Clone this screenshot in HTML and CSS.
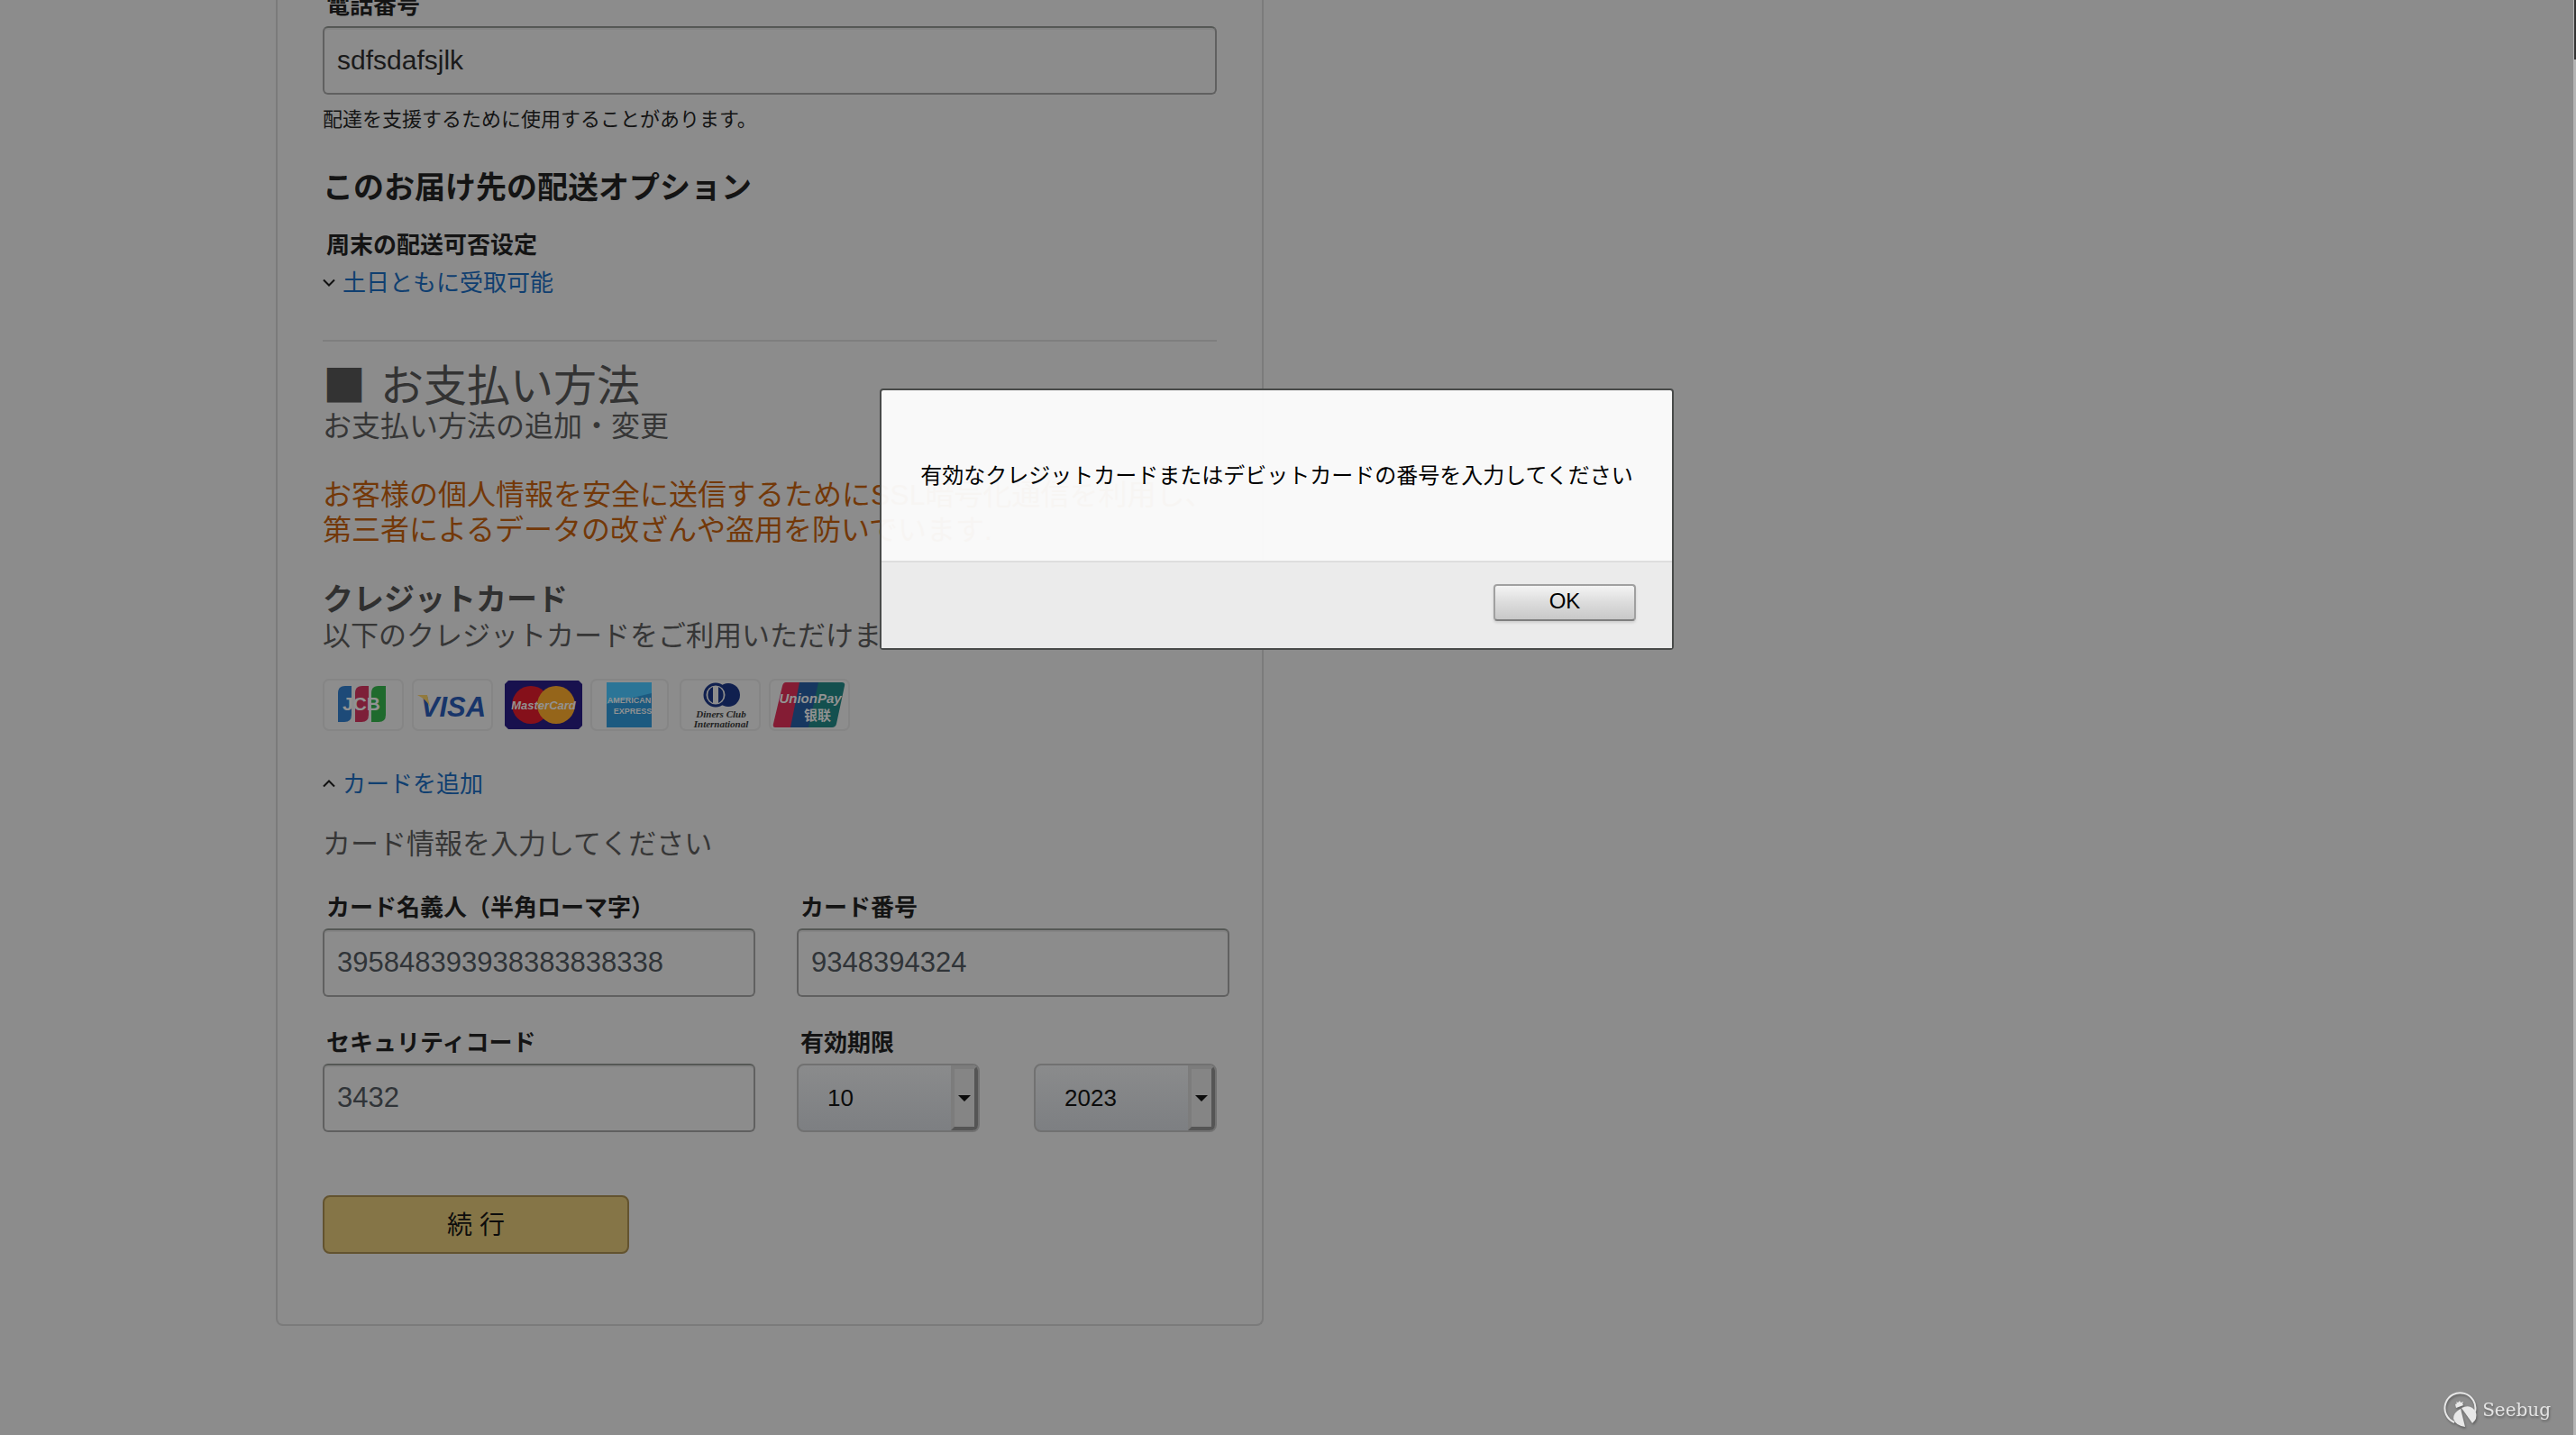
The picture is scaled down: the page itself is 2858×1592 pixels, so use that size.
FILE: index.html
```html
<!DOCTYPE html>
<html lang="ja">
<head>
    <meta charset="UTF-8">
    <meta name="viewport" content="width=device-width, initial-scale=1.0">
    <title>お支払い方法</title>
    <link rel="stylesheet" href="styles.css">
</head>
<body>
    <form class="panel" onsubmit="return false">
        <div class="field">
            <label for="phone">電話番号</label>
            <input type="text" id="phone" value="sdfsdafsjlk">
        </div>
        <p class="help">配達を支援するために使用することがあります。</p>

        <h2 class="option-title">このお届け先の配送オプション</h2>
        <p class="option-label">周末の配送可否设定</p>
        <a href="#" class="toggle">
            <svg width="14" height="10" viewBox="0 0 14 10"><path d="M1 1.5 L7 7.5 L13 1.5"/></svg>
            土日ともに受取可能
        </a>

        <hr>

        <h1><span class="bullet">■</span>お支払い方法</h1>
        <p class="lead">お支払い方法の追加・変更</p>
        <p class="secure">お客様の個人情報を安全に送信するためにSSL暗号化通信を利用し、<br>第三者によるデータの改ざんや盗用を防いでいます.</p>

        <h2 class="card-title">クレジットカード</h2>
        <p class="card-text">以下のクレジットカードをご利用いただけます</p>

        <div class="brands">
            <!-- JCB -->
            <svg class="brand" viewBox="0 0 90 58">
                <rect class="plate" x="1" y="1" width="88" height="56" rx="6"/>
                <path fill="#1d4a78" d="M17 16 q0-8 8-8 h7 v32 q0 8-8 8 h-7z"/>
                <path fill="#7d1f38" d="M36 16 q0-8 8-8 h7 v32 q0 8-8 8 h-7z"/>
                <path fill="#1f6a2d" d="M54 16 q0-8 8-8 h8 v32 q0 8-8 8 h-8z"/>
                <text class="mark jcb" x="43" y="35">JCB</text>
            </svg>
            <!-- VISA -->
            <svg class="brand" viewBox="0 0 90 58">
                <rect class="plate" x="1" y="1" width="88" height="56" rx="6"/>
                <text class="mark visa" x="46" y="42">VISA</text>
                <path fill="#927a3d" d="M6 18 h11 l3 13 q-4-8-14-13z"/>
            </svg>
            <!-- MasterCard -->
            <svg class="brand" viewBox="0 0 90 58">
                <path fill="#18114e" d="M8 2 h78 l4 4 v46 l-4 4 h-78 l-4-4 v-46z"/>
                <circle fill="#85101a" cx="33" cy="29" r="21"/>
                <circle fill="#95651a" cx="61" cy="29" r="21"/>
                <text class="mark master" x="47" y="34">MasterCard</text>
            </svg>
            <!-- American Express -->
            <svg class="brand" viewBox="0 0 90 58">
                <rect class="plate" x="1" y="1" width="85" height="56" rx="6"/>
                <rect fill="#1c5a80" x="18" y="4" width="50" height="50"/>
                <path fill="#2b7597" d="M18 4 h50 v12 l-50 12z"/>
                <text class="mark amex" x="43" y="27">AMERICAN</text>
                <text class="mark amex" x="47" y="39">EXPRESS</text>
            </svg>
            <!-- Diners Club -->
            <svg class="brand" viewBox="0 0 90 58">
                <rect class="plate" x="1" y="1" width="88" height="56" rx="6"/>
                <circle fill="#10204f" cx="54" cy="18" r="13"/>
                <circle fill="#8c8c8c" stroke="#10204f" stroke-width="3" cx="40" cy="18" r="12"/>
                <path fill="#10204f" d="M37 9 a10 10 0 0 0 0 18z M43 9 a10 10 0 0 1 0 18z"/>
                <text class="mark diners" x="46" y="43">Diners Club</text>
                <text class="mark diners" x="46" y="54">International</text>
            </svg>
            <!-- UnionPay -->
            <svg class="brand" viewBox="0 0 90 58">
                <rect class="plate" x="1" y="1" width="88" height="56" rx="6"/>
                <path fill="#841c34" d="M19 4 h18 l-11 50 h-19 q-3 0-2-4 l10-42 q1-4 4-4z"/>
                <path fill="#173760" d="M34 4 h23 l-11 50 h-22z"/>
                <path fill="#14504f" d="M55 4 h26 q4 0 3 4 l-9 42 q-1 4-5 4 h-26z"/>
                <text class="mark union" x="46" y="27">UnionPay</text>
                <text class="mark union-cn" x="54" y="46">银联</text>
            </svg>
        </div>

        <a href="#" class="toggle add-card">
            <svg width="14" height="10" viewBox="0 0 14 10"><path d="M1 7.5 L7 1.5 L13 7.5"/></svg>
            カードを追加
        </a>
        <p class="card-info">カード情報を入力してください</p>

        <div class="card-grid">
            <div class="field">
                <label for="holder">カード名義人（半角ローマ字）</label>
                <input type="text" id="holder" class="num" value="395848393938383838338">
            </div>
            <div class="field">
                <label for="number">カード番号</label>
                <input type="text" id="number" class="num" value="9348394324">
            </div>
            <div class="field">
                <label for="cvv">セキュリティコード</label>
                <input type="text" id="cvv" class="num" value="3432">
            </div>
            <div class="field">
                <label for="month">有効期限</label>
                <div class="expiry">
                    <div class="drop">
                        <select id="month"><option>10</option></select>
                        <span class="arrow"></span>
                    </div>
                    <div class="drop">
                        <select id="year" aria-label="年"><option>2023</option></select>
                        <span class="arrow"></span>
                    </div>
                </div>
            </div>
        </div>

        <button type="submit" class="continue">続 行</button>
    </form>

    <div class="dialog" role="alertdialog" aria-labelledby="message">
        <p class="message" id="message">有効なクレジットカードまたはデビットカードの番号を入力してください</p>
        <div class="dialog-footer">
            <button type="button" class="ok">OK</button>
        </div>
    </div>

    <div class="watermark">
        <svg width="38" height="40" viewBox="0 0 38 40">
            <path fill="none" stroke="#e8e8e8" stroke-width="2" d="M12 34 A17 17 0 1 1 35 22"/>
            <path fill="#e8e8e8" d="M13 14 l2-1 -1-2 2 1 2-2 1 2 3-1 -1 2 1 2 -8 3z"/>
            <path fill="#e8e8e8" d="M19 19 L24 39 Q14 38 11 30 Q11 23 19 19z"/>
            <path fill="#e8e8e8" d="M20 18 Q31 13 36 23 Q38 30 32 35z"/>
        </svg>
        <span>Seebug</span>
    </div>
    <div class="scrollbar"><div class="thumb"></div></div>
</body>
</html>
```
FILE: styles.css
```css
* {
    box-sizing: border-box;
}
body {
    margin: 0;
    min-height: 100vh;
    overflow: hidden;
    background-color: #8c8c8c;
    color: #141414;
    font-family: "Liberation Sans", "Noto Sans CJK JP", sans-serif;
    font-size: 26px;
    line-height: 30px;
}
h1, h2, p {
    margin: 0;
}

/* form */
.panel {
    max-width: 1096px;
    margin: -10px 0 0 306px;
    padding: 0 50px 78px;
    border: 2px solid #7b7b7b;
    border-top: none;
    border-radius: 0 0 8px 8px;
}
.field label {
    display: block;
    margin-bottom: 8px;
    padding: 1px 0 0 4px;
    font-weight: bold;
}
.field input {
    display: block;
    width: 100%;
    height: 76px;
    padding: 0 14px;
    border: 2px solid #606060;
    border-top-color: #555855;
    border-radius: 6px;
    background: transparent;
    box-shadow: inset 0 2px 0 #848484;
    color: #1a1a1a;
    font-family: inherit;
    font-size: 30px;
}
.field input.num {
    color: #303438;
    font-size: 31px;
}
.help {
    margin-top: 13px;
    font-size: 22px;
}
.option-title {
    margin-top: 40px;
    font-size: 34px;
    line-height: 40px;
}
.option-label {
    margin-top: 29px;
    padding-left: 4px;
    font-weight: bold;
}
.toggle {
    display: flex;
    align-items: center;
    gap: 8px;
    margin-top: 12px;
    color: #103f70;
    text-decoration: none;
}
.toggle svg {
    fill: none;
    stroke: #111;
    stroke-width: 2;
}
hr {
    height: 2px;
    margin: 48px 0 18px;
    border: none;
    background-color: #7e7e7e;
}
h1 {
    color: #333;
    font-family: "Noto Sans CJK JP", sans-serif;
    font-size: 48px;
    font-weight: normal;
    line-height: 54px;
}
.bullet {
    margin-right: 16px;
}
.lead {
    margin-top: 4px;
    color: #363636;
    font-size: 32px;
    line-height: 36px;
}
.secure {
    margin-top: 39px;
    color: #733808;
    font-size: 32px;
    line-height: 39px;
}
.card-title {
    margin-top: 37px;
    color: #303030;
    font-size: 34px;
    line-height: 40px;
}
.card-text,
.card-info {
    color: #363636;
    font-size: 31px;
    line-height: 40px;
}
.card-text {
    margin-top: 1px;
}

/* accepted cards */
.brands {
    display: flex;
    gap: 9px;
    margin-top: 27px;
}
.brand {
    width: 90px;
    height: 58px;
}
.plate {
    fill: #8d8d8d;
    stroke: #858585;
    stroke-width: 2;
}
.mark {
    fill: #929292;
    font-family: "Liberation Sans", sans-serif;
    font-weight: bold;
    text-anchor: middle;
}
.jcb {
    font-size: 21px;
}
.visa {
    fill: #18356a;
    font-size: 31px;
    font-style: italic;
}
.master {
    font-size: 13px;
    font-style: italic;
}
.amex {
    font-size: 9px;
}
.diners {
    fill: #222;
    font-family: "Liberation Serif", serif;
    font-size: 11px;
    font-style: italic;
}
.union {
    font-size: 15px;
    font-style: italic;
}
.union-cn {
    font-family: "Noto Sans CJK SC", sans-serif;
    font-size: 15px;
}
.add-card {
    margin-top: 44px;
}
.card-info {
    margin: 32px 0 34px;
}

.card-grid {
    display: grid;
    grid-template-columns: 1fr 1fr;
    gap: 35px 46px;
    margin-right: -14px;
}
.expiry {
    display: grid;
    grid-template-columns: 1fr 1fr;
    gap: 60px;
    padding-right: 14px;
}
.drop {
    display: flex;
    height: 76px;
    overflow: hidden;
    border: 2px solid #717171;
    border-radius: 8px;
    background: linear-gradient(#8a8b8c, #7d7f82);
}
.drop select {
    flex: 1;
    min-width: 0;
    padding: 0 0 0 32px;
    border: none;
    background: transparent;
    color: #0c0c0c;
    font-family: inherit;
    font-size: 26px;
    appearance: none;
}
.arrow {
    display: flex;
    align-items: center;
    justify-content: center;
    width: 30px;
    border: 4px solid;
    border-color: #7c7c7c #555 #555 #7c7c7c;
    background-color: #858585;
    pointer-events: none;
}
.arrow::before {
    content: "";
    border: 7px solid transparent;
    border-top-color: #0c0c0c;
    border-bottom: none;
}
.continue {
    display: block;
    width: 340px;
    height: 65px;
    margin-top: 70px;
    padding-bottom: 4px;
    border: 2px solid #63532f;
    border-radius: 8px;
    background-color: #857547;
    color: #0c0c0c;
    font-family: inherit;
    font-size: 28px;
}

/* alert */
.dialog {
    position: absolute;
    top: 431px;
    left: 976px;
    min-width: 881px;
    border: 2px solid #484a49;
    border-radius: 4px;
    background-color: rgba(253, 253, 253, 0.96);
    color: #000;
    font-size: 24px;
}
.message {
    padding: 80px 40px 79px;
    text-align: center;
}
.dialog-footer {
    display: flex;
    justify-content: flex-end;
    padding: 24px 40px 30px;
    border-top: 2px solid #dedede;
    background-color: rgba(234, 234, 234, 0.95);
}
.ok {
    width: 158px;
    height: 41px;
    padding: 0 0 4px;
    border: 2px solid #a0a0a0;
    border-bottom-color: #7f7f7f;
    border-radius: 4px;
    background: linear-gradient(#f4f4f4, #dcdcdc 50%, #c8c8c8);
    box-shadow: 0 2px 3px rgba(0, 0, 0, 0.12);
    color: #000;
    font-family: inherit;
    font-size: 24px;
}

/* logo in the corner */
.watermark {
    position: absolute;
    right: 28px;
    bottom: 8px;
    display: flex;
    align-items: center;
    gap: 5px;
    color: #e4e4e4;
    font-family: "DejaVu Serif", serif;
    font-size: 20px;
    filter: drop-shadow(1px 2px 1px rgba(0, 0, 0, 0.3));
}
.scrollbar {
    position: absolute;
    top: 0;
    right: 0;
    bottom: 0;
    width: 3px;
    padding-left: 1px;
    background-color: #b4b4b4;
}
.thumb {
    height: 66px;
    background-color: #333;
}
```
